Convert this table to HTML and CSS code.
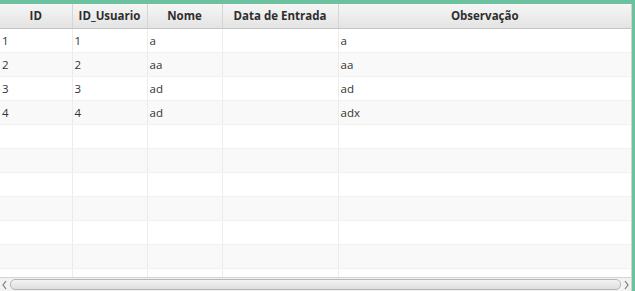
FILE: index.html
```html
<!DOCTYPE html>
<html>
<head>
<meta charset="utf-8">
<link rel="stylesheet" href="styles.css">
</head>
<body>
<div class="frame">
  <div class="table-wrap">
    <table class="grid">
      <colgroup>
        <col class="c1"><col class="c2"><col class="c3"><col class="c4"><col class="c5">
      </colgroup>
      <thead>
        <tr><th>ID</th><th>ID_Usuario</th><th>Nome</th><th>Data de Entrada</th><th>Observação</th></tr>
      </thead>
      <tbody>
        <tr><td>1</td><td>1</td><td>a</td><td></td><td>a</td></tr>
        <tr><td>2</td><td>2</td><td>aa</td><td></td><td>aa</td></tr>
        <tr><td>3</td><td>3</td><td>ad</td><td></td><td>ad</td></tr>
        <tr><td>4</td><td>4</td><td>ad</td><td></td><td>adx</td></tr>
        <tr><td></td><td></td><td></td><td></td><td></td></tr>
        <tr><td></td><td></td><td></td><td></td><td></td></tr>
        <tr><td></td><td></td><td></td><td></td><td></td></tr>
        <tr><td></td><td></td><td></td><td></td><td></td></tr>
        <tr><td></td><td></td><td></td><td></td><td></td></tr>
        <tr><td></td><td></td><td></td><td></td><td></td></tr>
        <tr><td></td><td></td><td></td><td></td><td></td></tr>
      </tbody>
    </table>
    <div class="hscroll">
      <svg class="arrow" width="9" height="12" viewBox="0 0 9 12"><path d="M6 2 L3 6 L6 10" fill="none" stroke="#7a7a7a" stroke-width="1.2"/></svg>
      <div class="track"><div class="thumb"></div></div>
      <svg class="arrow" width="9" height="12" viewBox="0 0 9 12"><path d="M3 2 L6 6 L3 10" fill="none" stroke="#7a7a7a" stroke-width="1.2"/></svg>
    </div>
  </div>
</div>
</body>
</html>
```

FILE: styles.css
```css
html, body {
  margin: 0;
  padding: 0;
  background: #6cc29f;
}
.frame {
  width: 635px;
  height: 291px;
  box-sizing: border-box;
  padding-top: 4px;
  padding-right: 3px;
  background: #6cc29f;
  overflow: hidden;
}
.table-wrap {
  position: relative;
  width: 632px;
  height: 287px;
  background: #ffffff;
  border-right: 1px solid #c9d6cf;
  box-sizing: border-box;
  overflow: hidden;
  font-family: "Open Sans", "Noto Sans", sans-serif;
  font-size: 11.5px;
  color: #333333;
}
.grid {
  border-collapse: collapse;
  table-layout: fixed;
  width: 631px;
}
.c1 { width: 72px; }
.c2 { width: 75px; }
.c3 { width: 75px; }
.c4 { width: 116px; }
.c5 { width: 293px; }
th {
  height: 24px;
  padding: 0;
  font-weight: bold;
  font-size: 11.5px;
  color: #2e2e2e;
  text-align: center;
  background: linear-gradient(#f6f6f6, #e3e3e3);
  border-right: 1px solid #d6d6d6;
  border-bottom: 1px solid #c4c4c4;
  box-sizing: border-box;
}
th:last-child { border-right: none; }
td {
  height: 24px;
  padding: 0 0 0 2px;
  box-sizing: border-box;
  border-right: 1px solid #ececec;
  border-bottom: 1px solid #f0f0f0;
  white-space: nowrap;
}
td:last-child { border-right: none; }
tbody tr:nth-child(even) td { background: #f9f9f9; }
.hscroll {
  position: absolute;
  left: 0;
  right: 0;
  bottom: 0;
  height: 14px;
  display: flex;
  align-items: center;
  background: #f2f2f2;
  border-top: 1px solid #d4d4d4;
  box-sizing: border-box;
}
.arrow {
  flex: none;
  display: block;
}
.track {
  flex: 1;
  height: 11px;
  display: flex;
}
.thumb {
  flex: 1;
  margin: 0 1px;
  border: 1px solid #b6b6b6;
  border-radius: 5px;
  background: linear-gradient(#f4f4f4, #dedede);
}
```
